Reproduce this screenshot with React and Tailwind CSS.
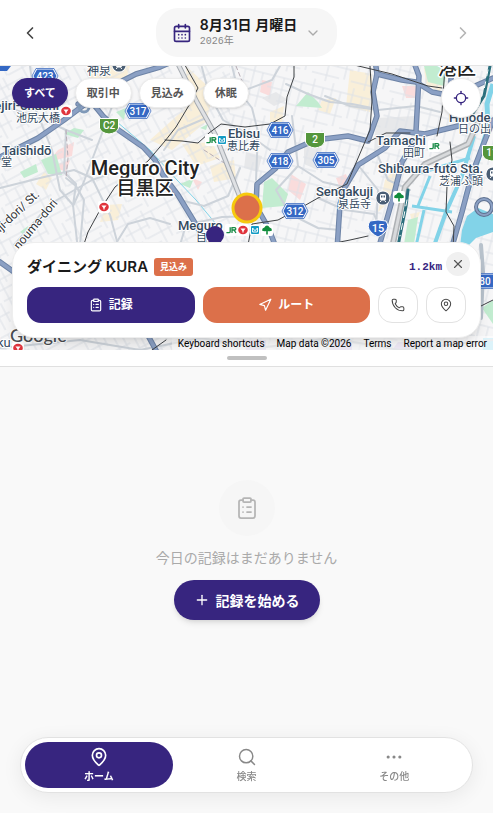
import React from "react";
import {
  CalendarDays,
  ChevronDown,
  ChevronLeft,
  ChevronRight,
  ClipboardList,
  Ellipsis,
  Locate,
  MapPin,
  Navigation,
  Phone,
  Plus,
  Search,
  X,
} from "lucide-react";

const majorRoads = [
  "M0 157 L12 151 L38 138 L64 120 L88 102 L104 92",
  "M122 81 L136 74 L160 67 L176 60",
  "M78 104 L94 105 L103 116 L117 129 L143 147 L155 160 L163 175 L178 195 L195 223 L206 245",
  "M375 60 L377 74 L373 92 L377 116 L368 141 L348 136 L315 140 L288 152 L275 169 L257 184 L256 206 L268 227 L277 250",
  "M377 74 L402 80 L416 82 L432 92 L442 94 L466 90 L493 78",
  "M413 60 L419 76 L416 131",
  "M458 126 L425 134 L400 131 L385 148 L358 165 L345 187 L340 204 L337 250",
  "M414 142 L402 162 L394 194 L378 250",
  "M493 120 L482 148 L472 174 L462 212 L451 250",
  "M452 60 L450 100 L458 120",
  "M0 262 L14 272 L30 300",
  "M145 330 L158 354",
];

const mediumRoads = [
  "M30 66 L36 110 L52 150 L60 190 L73 205 L78 250",
  "M0 188 L40 178 L74 170 L92 178 L110 215 L118 245",
  "M66 130 L64 172 L76 184 L73 206 L83 184 L104 128 L116 96",
  "M0 105 L40 118 L66 130 L92 140",
  "M14 245 L50 204 L92 180 L120 170 L170 160",
  "M115 245 L128 224 L150 218 L170 224",
  "M80 245 L84 200 L76 186 L66 178",
  "M200 60 L209 94 L223 120 L248 134 L270 150",
  "M232 66 L238 90 L252 108 L258 132 L256 180",
  "M286 84 L308 94 L330 102 L352 104 L372 108",
  "M240 168 L228 196 L204 206 L180 200",
  "M292 116 L298 166 L323 182 L345 187",
  "M298 166 L276 190 L290 214 L318 228 L340 230",
  "M325 96 L350 106 L378 110 L416 106 L440 112",
  "M378 156 L388 180 L410 190",
  "M358 165 L378 190 L376 230",
  "M180 245 L186 225 L222 217 L254 216",
  "M206 118 L178 130 L164 150",
  "M280 66 L272 80 L240 92",
  "M318 198 L345 210 L374 214 L380 228",
  "M0 348 L80 340 L140 350 L200 338 L260 348 L330 338 L400 350 L493 340",
];

const railways = [
  "M182 60 L198 88 L188 107 L176 127 L165 141 L148 161 L115 187 L100 210 L88 232 L82 250",
  "M165 140 L182 141 L198 143 L209 133 L221 124 L245 127 L270 124 L285 116 L287 97 L294 77 L294 60",
  "M350 64 L392 74 L428 86 L442 88",
  "M370 66 L372 100 L370 130 L347 184 L318 198 L304 206 L278 220 L252 224 L248 245",
  "M445 66 L442 112 L437 136",
  "M450 142 L452 160 L447 186 L446 212 L454 226 L453 250",
  "M368 142 L386 133 L410 133",
  "M340 242 L350 240 L368 236",
  "M481 306 L493 300",
  "M152 350 L166 340",
];

const stations = [
  { x: 66, y: 111 },
  { x: 104, y: 207 },
  { x: 18, y: 348 },
];

const hexShields = [
  { x: 45, y: 76, n: "423" },
  { x: 138, y: 111, n: "317" },
  { x: 280, y: 130, n: "416" },
  { x: 280, y: 161, n: "418" },
  { x: 326, y: 160, n: "305" },
  { x: 295, y: 211, n: "312" },
  { x: 485, y: 281, n: "80" },
];

const greenShields = [
  { x: 109, y: 126, n: "C2" },
  { x: 315, y: 140, n: "2" },
  { x: 492, y: 153, n: "11" },
];

const placeText = "fill-[#34495e] stroke-white stroke-2 [paint-order:stroke] [stroke-linejoin:round]";
const cityText = "fill-[#222222] stroke-white stroke-[3px] [paint-order:stroke] [stroke-linejoin:round]";

function Place({ x, y, ja, jx, jy, jaAnchor = "end", children }) {
  return (
    <g className={placeText}>
      <text x={jx} y={jy} textAnchor={jaAnchor} className="text-[11px]">
        {ja}
      </text>
      <text x={x} y={y} className="text-[13px] font-medium">
        {children}
      </text>
    </g>
  );
}

function MetroMark({ x, y }) {
  return (
    <g transform={`translate(${x} ${y})`}>
      <rect x="-6" y="-6" width="12" height="12" rx="2" fill="#fff" />
      <ellipse rx="4.8" ry="4.2" fill="#e0343c" />
      <path d="M-2.6 -1.6 H2.6 L0.6 1 V2.6 H-0.6 V1Z" fill="#fff" />
    </g>
  );
}

function JrMark({ x, y }) {
  return (
    <g transform={`translate(${x} ${y})`}>
      <rect x="-6" y="-6" width="12" height="12" rx="2" fill="#fff" />
      <path
        d="M-0.8 -2.8 V1.4 Q-0.8 2.6 -2 2.6 H-4.6 M1 3 V-2.4 H3.6 Q4.8 -2.4 4.8 -1.2 T3.6 0 H1.6 M3 0 L5 3"
        fill="none"
        stroke="#178a45"
        strokeWidth="1.3"
      />
    </g>
  );
}

function SubwayMark({ x, y }) {
  return (
    <g transform={`translate(${x} ${y})`}>
      <rect x="-5" y="-5" width="10" height="10" rx="1" fill="#fff" />
      <rect x="-4" y="-4" width="8" height="8" rx="1" fill="#149bc4" />
      <path d="M-2.4 -2 V2 H2.4 V-2 L0 0.8 L-2.4 -2" fill="none" stroke="#fff" strokeWidth="1" />
    </g>
  );
}

function ToeiMark({ x, y }) {
  return (
    <g transform={`translate(${x} ${y})`}>
      <rect x="-6" y="-6" width="12" height="12" rx="2" fill="#fff" />
      <path
        d="M-5 0.6 Q-5 -2 -2.6 -2.4 Q-1.6 -4.4 0 -4.4 Q1.6 -4.4 2.6 -2.4 Q5 -2 5 0.6 Q3 1.8 0.8 1 V4.4 H-0.8 V1 Q-3 1.8 -5 0.6Z"
        fill="#118c3c"
      />
    </g>
  );
}

function TrainMark({ x, y }) {
  return (
    <g transform={`translate(${x} ${y})`}>
      <circle r="7.4" fill="#fff" />
      <circle r="6.6" fill="#4a5e74" />
      <rect x="-3" y="-4" width="6" height="6.4" rx="1.4" fill="#fff" />
      <path d="M-2 -2.6 H-0.5 V-0.6 H-2Z M0.5 -2.6 H2 V-0.6 H0.5Z" fill="#4a5e74" />
      <path d="M-1.6 2.4 L-2.8 4 M1.6 2.4 L2.8 4" stroke="#fff" strokeWidth="1" />
    </g>
  );
}

function CityMap() {
  return (
    <svg
      viewBox="0 66 493 284"
      preserveAspectRatio="xMidYMid slice"
      className="block h-full w-full font-[Roboto,'Noto_Sans_CJK_JP',sans-serif]"
      role="img"
      aria-label="Meguro City"
    >
      <defs>
        <pattern id="blocks-a" width="46" height="42" patternUnits="userSpaceOnUse" patternTransform="rotate(-28)">
          <path
            d="M0 5 H46 M0 16 H25 M18 28 H46 M0 37 H30 M6 0 V42 M17 5 V28 M25 0 V20 M34 5 V42 M42 16 V37 M12 28 V42"
            stroke="#dde1e7"
            strokeWidth="1"
            fill="none"
          />
        </pattern>
        <pattern id="blocks-b" width="40" height="48" patternUnits="userSpaceOnUse" patternTransform="rotate(14)">
          <path
            d="M0 7 H40 M0 19 H22 M12 31 H40 M0 42 H28 M5 0 V31 M15 7 V48 M24 0 V31 M33 7 V42"
            stroke="#dde1e7"
            strokeWidth="1"
            fill="none"
          />
        </pattern>
      </defs>
      <rect y="60" width="493" height="300" fill="#f6f6f7" />
      <g fill="#f9efd9">
        <path d="M88 66 L130 66 L120 100 L92 96Z" />
        <path d="M186 66 L214 92 L206 122 L172 150 L150 140 L188 106Z" />
        <path d="M182 144 L212 142 L220 158 L196 166Z" />
        <path d="M350 70 L372 74 L370 112 L346 106Z" />
        <path d="M385 180 L402 160 L396 196 L378 212Z" />
        <path d="M106 205 L122 204 L118 220 L100 222Z" />
        <path d="M210 166 L234 160 L236 178 L214 182Z" />
        <path d="M424 68 L446 70 L440 92 L426 84Z" />
        <path d="M410 214 L420 212 L414 228Z" />
        <path d="M270 112 L284 106 L282 122 L270 124Z" />
        <path d="M322 100 L336 98 L330 114 L318 110Z" />
        <path d="M44 172 L52 178 L46 190 L36 184Z" />
      </g>
      <g fill="#fadcdc">
        <path d="M58 150 L74 142 L72 156 L48 162Z" />
        <path d="M52 166 L70 160 L66 172Z" />
        <path d="M262 80 L272 82 L270 96 L260 92Z" />
        <path d="M291 174 L306 184 L300 200 L288 190Z" />
        <path d="M402 86 L418 86 L418 98 L406 98Z" />
        <path d="M336 178 L346 174 L350 186 L340 188Z" />
        <path d="M192 178 L202 182 L198 190Z" />
      </g>
      <g fill="#e7e8ea">
        <path d="M304 144 L322 148 L318 170 L304 164Z" />
        <path d="M376 118 L416 116 L414 132 L392 136 L374 152Z" />
        <path d="M246 152 L262 156 L258 172 L244 168Z" />
        <path d="M262 98 L276 92 L288 100 L274 106Z" />
      </g>
      <rect y="60" width="230" height="300" fill="url(#blocks-a)" />
      <rect x="230" y="60" width="263" height="300" fill="url(#blocks-b)" />
      <g fill="#c2ecd0">
        <path d="M41 160 L56 154 L62 175 L48 174Z" />
        <path d="M20 172 L36 164 L38 172 L24 178Z" />
        <path d="M64 134 L74 128 L84 130 L78 138Z" />
        <path d="M116 112 L126 108 L124 120Z" />
        <path d="M296 106 L308 92 L318 102 L322 108Z" />
        <path d="M264 182 L272 178 L288 194 L284 206 L262 208Z" />
        <path d="M424 66 L448 66 L444 86 L428 82Z" />
        <path d="M180 184 L194 178 L190 188Z" />
        <path d="M408 220 L418 217 L414 244 L404 244Z" />
        <path d="M20 232 L28 226 L26 236Z" />
        <path d="M482 308 L493 300 V324Z" />
        <path d="M200 128 L208 124 L206 130Z" />
      </g>
      <g fill="none" stroke="#82d3e8">
        <path d="M493 84 L487 104 L488 128 L478 160 L466 196" strokeWidth="5" />
        <path d="M415 174 L446 166 M412 206 L452 212 M430 176 L418 206 M424 210 L416 246 M436 168 L470 158" strokeWidth="3" />
        <path d="M474 136 L462 176 L446 212 L434 246" strokeWidth="4" />
        <path d="M117 122 L150 150 L177 180 L196 200 L216 224" strokeWidth="1" />
      </g>
      <path d="M467 216 L478 208 L493 214 V232 L476 238 L468 246 H460 L462 230Z" fill="#82d3e8" />
      <rect x="483" y="338" width="10" height="12" fill="#a7e2f2" />
      <path d="M244 340 H266 V350 H246Z M398 342 H420 V350 H392Z M332 340 H352 V350 H330Z" fill="#ded3ef" />
      <g fill="none" strokeLinejoin="round" strokeLinecap="round">
        {mediumRoads.map((d) => (
          <path key={d} d={d} stroke="#cdd3da" strokeWidth="2" />
        ))}
        <path
          d="M66 130 L68 158 L66 178 M204 150 L232 168 M236 66 L248 96"
          stroke="#b7adb5"
          strokeWidth="1"
          strokeDasharray="4 3"
        />
        {majorRoads.map((d) => (
          <path key={d} d={d} stroke="#6d83a6" strokeWidth="5.5" />
        ))}
        {majorRoads.map((d) => (
          <path key={d} d={d} stroke="#8ba0c4" strokeWidth="3.5" />
        ))}
        <circle cx="484" cy="207" r="8" stroke="#5f7291" strokeWidth="4" />
        <circle cx="484" cy="207" r="8" stroke="#8ba0c4" strokeWidth="2" />
        <circle cx="84" cy="107" r="5" stroke="#7f99b8" strokeWidth="3" />
        <path d="M481 245 L483 272 L481 318" stroke="#b8c2cc" strokeWidth="4" />
        <path d="M176 60 L197 102 L215 134 L232 177 L241 200" stroke="#a6abb1" strokeWidth="5" />
        <path d="M176 60 L197 102 L215 134 L232 177 L241 200" stroke="#dfe1e4" strokeWidth="3" />
        <path d="M480 118 L468 144 L425 164 L405 187 L392 248" stroke="#aeb1b4" strokeWidth="6" />
        <path d="M480 118 L468 144 L425 164 L405 187 L392 248" stroke="#d8dadc" strokeWidth="3" />
        <path d="M490 66 L484 96 L470 118 M408 190 L406 206 L398 246" stroke="#2b6f7d" strokeWidth="3" />
        <path d="M407 200 L400 236 M488 70 L484 90" stroke="#ffffff" strokeWidth="1" strokeDasharray="6 6" />
        {railways.map((d) => (
          <path key={d} d={d} stroke="#3f4245" strokeWidth="1" />
        ))}
      </g>

      {hexShields.map(({ x, y, n }) => (
        <g key={n} transform={`translate(${x} ${y})`}>
          <path d="M-9 -7.5 H9 L13 0 L9 7.5 H-9 L-13 0Z" fill="#fff" stroke="#3d6cc0" strokeWidth="0.8" />
          <path d="M-8 -6.5 H8 L11.5 0 L8 6.5 H-8 L-11.5 0Z" fill="#3468c4" />
          <text y="4" textAnchor="middle" className="fill-white text-[10px] font-medium">
            {n}
          </text>
        </g>
      ))}
      {greenShields.map(({ x, y, n }) => (
        <g key={n} transform={`translate(${x} ${y})`}>
          <path d="M-9.5 -7.5 H9.5 V2 Q8 7 0 8 Q-8 7 -9.5 2Z" fill="#54963c" stroke="#fff" strokeWidth="1" />
          <text y="3" textAnchor="middle" className="fill-white text-[10px] font-medium">
            {n}
          </text>
        </g>
      ))}
      <g transform="translate(378 228)">
        <path
          d="M-8 -7 Q0 -9 8 -7 Q12 -1 7 4 Q3 8 0 9 Q-3 8 -7 4 Q-12 -1 -8 -7Z"
          fill="#3468c4"
          stroke="#fff"
          strokeWidth="1"
        />
        <text y="4" textAnchor="middle" className="fill-white text-[11px] font-medium">
          15
        </text>
      </g>

      <g className={placeText}>
        <text x="87" y="75" className="text-[12px]">神泉</text>
        <text x="60" y="122" textAnchor="end" className="text-[11px]">池尻大橋</text>
        <text x="59" y="110" textAnchor="end" className="text-[13px] font-medium">Ikejiri-ohashi</text>
        <text x="1" y="166" className="text-[11px]">堂</text>
        <text x="2" y="155" className="text-[13px] font-medium">Taishidō</text>
        <text x="-3" y="347" className="text-[13px]">ku</text>
      </g>
      <g className="fill-[#33363a] stroke-white stroke-2 text-[12px] [paint-order:stroke]">
        <text transform="translate(-12 244) rotate(-43)">kunji-dori/ St.</text>
        <text transform="translate(19 250) rotate(-50)">nouma-dori</text>
      </g>
      <Place x="228" y="138" ja="恵比寿" jx="260" jy="150">Ebisu</Place>
      <Place x="376" y="145" ja="田町" jx="425" jy="157">Tamachi</Place>
      <Place x="449" y="122" ja="日の出" jx="458" jy="133" jaAnchor="start">Hinode</Place>
      <Place x="378" y="173" ja="芝浦ふ頭" jx="483" jy="185">Shibaura-futō Sta.</Place>
      <Place x="316" y="196" ja="泉岳寺" jx="371" jy="208">Sengakuji</Place>
      <Place x="178" y="230" ja="目黒" jx="218" jy="242">Meguro</Place>
      <g className={cityText}>
        <text x="145" y="175" textAnchor="middle" className="text-[20px] font-medium">Meguro City</text>
        <text x="145" y="195" textAnchor="middle" className="text-[19px] font-medium">目黒区</text>
        <text x="457" y="75" textAnchor="middle" className="text-[19px] font-medium">港区</text>
      </g>

      {stations.map((s) => (
        <MetroMark key={s.x} x={s.x} y={s.y} />
      ))}
      <JrMark x={211} y={140} />
      <SubwayMark x={222} y={140} />
      <JrMark x={434} y={146} />
      <JrMark x={231} y={230} />
      <MetroMark x={243} y={230} />
      <SubwayMark x={255} y={230} />
      <ToeiMark x={267} y={230} />
      <TrainMark x={383} y={198} />
      <ToeiMark x={399} y={197} />
      <TrainMark x={493} y={174} />
      <TrainMark x={119} y={65} />
      <path d="M0 66 H11 L7 71 H0Z" fill="#3468c4" />

      <circle cx="215" cy="235" r="9" fill="#37257f" />
      <circle cx="247" cy="208" r="14" fill="#dc704a" stroke="#f6c90e" strokeWidth="3" />
      <text
        x="10"
        y="342"
        className="fill-[#4a4d52] stroke-white stroke-2 font-[Lato,sans-serif] text-[18px] font-medium [paint-order:stroke]"
      >
        Google
      </text>
    </svg>
  );
}

const filters = ["すべて", "取引中", "見込み", "休眠"];

const credits = ["Keyboard shortcuts", "Map data ©2026", "Terms", "Report a map error"];

const tabs = [
  { label: "ホーム", Icon: MapPin },
  { label: "検索", Icon: Search },
  { label: "その他", Icon: Ellipsis },
];

export default function App() {
  const [filter, setFilter] = React.useState("すべて");
  const [tab, setTab] = React.useState("ホーム");

  return (
    <div className="relative flex min-h-screen flex-col bg-[#f9f9f9] font-[Inter,'Noto_Sans_CJK_JP',sans-serif] text-[#1a1a1a]">
      <header className="flex items-center justify-between border-b border-[#e5e5e5] bg-white px-3 py-2">
        <button aria-label="前の日" className="flex size-9 items-center justify-center text-[#444444]">
          <ChevronLeft size={20} />
        </button>
        <button className="flex h-[49px] items-center gap-2 rounded-[22px] bg-[#f6f6f6] px-4 text-left">
          <CalendarDays size={20} className="text-[#37257f]" />
          <span className="flex flex-col">
            <span className="text-[14px] leading-[18px] font-semibold">8月31日 月曜日</span>
            <span className="font-['Liberation_Mono','Noto_Sans_CJK_JP',monospace] text-[10px] leading-[16px] text-[#888888]">
              2026年
            </span>
          </span>
          <ChevronDown size={16} className="text-[#aaaaaa]" />
        </button>
        <button aria-label="次の日" className="flex size-9 items-center justify-center text-[#b5b5b5]">
          <ChevronRight size={20} />
        </button>
      </header>

      <section className="relative h-[284px] overflow-hidden">
        <CityMap />
        <div className="absolute inset-x-3 top-3 flex items-start justify-between">
          <div className="flex gap-[7px]">
            {filters.map((f) => (
              <button
                key={f}
                onClick={() => setFilter(f)}
                className={
                  f === filter
                    ? "h-[30px] rounded-full border border-[#37257f] bg-[#37257f] px-[11px] text-[11px] font-semibold text-white shadow-sm"
                    : "h-[30px] rounded-full border border-[#ececec] bg-white px-[11px] text-[11px] font-semibold text-[#555555] shadow-sm"
                }
              >
                {f}
              </button>
            ))}
          </div>
          <button
            aria-label="現在地"
            className="flex size-10 items-center justify-center rounded-full border border-[#ececec] bg-white text-[#37257f] shadow-sm"
          >
            <Locate size={16} />
          </button>
        </div>

        <div className="absolute right-0 bottom-0 flex h-[14px] items-center bg-white/60 font-[Roboto,sans-serif] text-[10px] text-black">
          {credits.map((c) => (
            <a key={c} href="#map" className="px-[6px]">
              {c}
            </a>
          ))}
        </div>

        <article className="absolute inset-x-3 bottom-3 flex flex-col gap-[10px] rounded-[22px] border border-[#eeeeee] bg-white p-[14px] shadow-lg">
          <div className="flex h-5 items-center gap-[6px] pr-6">
            <h2 className="text-[15px] leading-5 font-semibold">ダイニング KURA</h2>
            <span className="rounded-[3px] bg-[#dc704a] px-[6px] text-[9px] leading-[18px] font-semibold text-white">
              見込み
            </span>
            <span className="ml-auto font-['Liberation_Mono',monospace] text-[11px] font-bold text-[#37257f]">1.2km</span>
          </div>
          <div className="flex gap-2">
            <button className="flex h-9 flex-1 items-center justify-center gap-[6px] rounded-[14px] bg-[#37257f] text-[12px] font-semibold text-white">
              <ClipboardList size={14} />
              記録
            </button>
            <button className="flex h-9 flex-1 items-center justify-center gap-[6px] rounded-[14px] bg-[#dc704a] text-[12px] font-semibold text-white">
              <Navigation size={14} />
              ルート
            </button>
            <button
              aria-label="電話"
              className="flex h-9 w-10 items-center justify-center rounded-[14px] border border-[#e2e2e2] text-[#444444]"
            >
              <Phone size={14} strokeWidth={1.75} />
            </button>
            <button
              aria-label="地図"
              className="flex h-9 w-10 items-center justify-center rounded-[14px] border border-[#e2e2e2] text-[#444444]"
            >
              <MapPin size={14} strokeWidth={1.75} />
            </button>
          </div>
          <button
            aria-label="閉じる"
            className="absolute top-[9px] right-[10px] flex size-6 items-center justify-center rounded-full bg-[#f0f0f0] text-[#555555]"
          >
            <X size={14} />
          </button>
        </article>
      </section>

      <div className="flex h-[17px] justify-center border-b border-[#e0e0e0] bg-white pt-[6px]">
        <div className="h-1 w-10 rounded-full bg-[#c0c0c0]" />
      </div>

      <main className="flex flex-1 flex-col items-center justify-center gap-3 pb-20">
        <div className="flex size-14 items-center justify-center rounded-full bg-[#f6f6f6] text-[#b5b5b5]">
          <ClipboardList size={24} strokeWidth={1.75} />
        </div>
        <p className="text-[14px] leading-5 text-[#aaaaaa]">今日の記録はまだありません</p>
        <button className="flex h-10 items-center gap-[6px] rounded-full bg-[#37257f] px-5 text-[14px] font-semibold text-white shadow-md">
          <Plus size={16} strokeWidth={2} />
          記録を始める
        </button>
      </main>

      <nav className="fixed inset-x-5 bottom-5 flex rounded-full border border-[#e2e2e2] bg-white p-1 shadow-[0_4px_20px_rgba(0,0,0,0.07)]">
        {tabs.map(({ label, Icon }) => (
          <button
            key={label}
            onClick={() => setTab(label)}
            className={
              label === tab
                ? "flex h-[46px] flex-1 flex-col items-center justify-center gap-[2px] rounded-full bg-[#37257f] text-[10px] leading-[14px] font-semibold text-white"
                : "flex h-[46px] flex-1 flex-col items-center justify-center gap-[2px] rounded-full text-[10px] leading-[14px] font-medium text-[#888888]"
            }
          >
            <Icon size={20} strokeWidth={label === tab ? 2 : 1.75} />
            {label}
          </button>
        ))}
      </nav>
    </div>
  );
}
